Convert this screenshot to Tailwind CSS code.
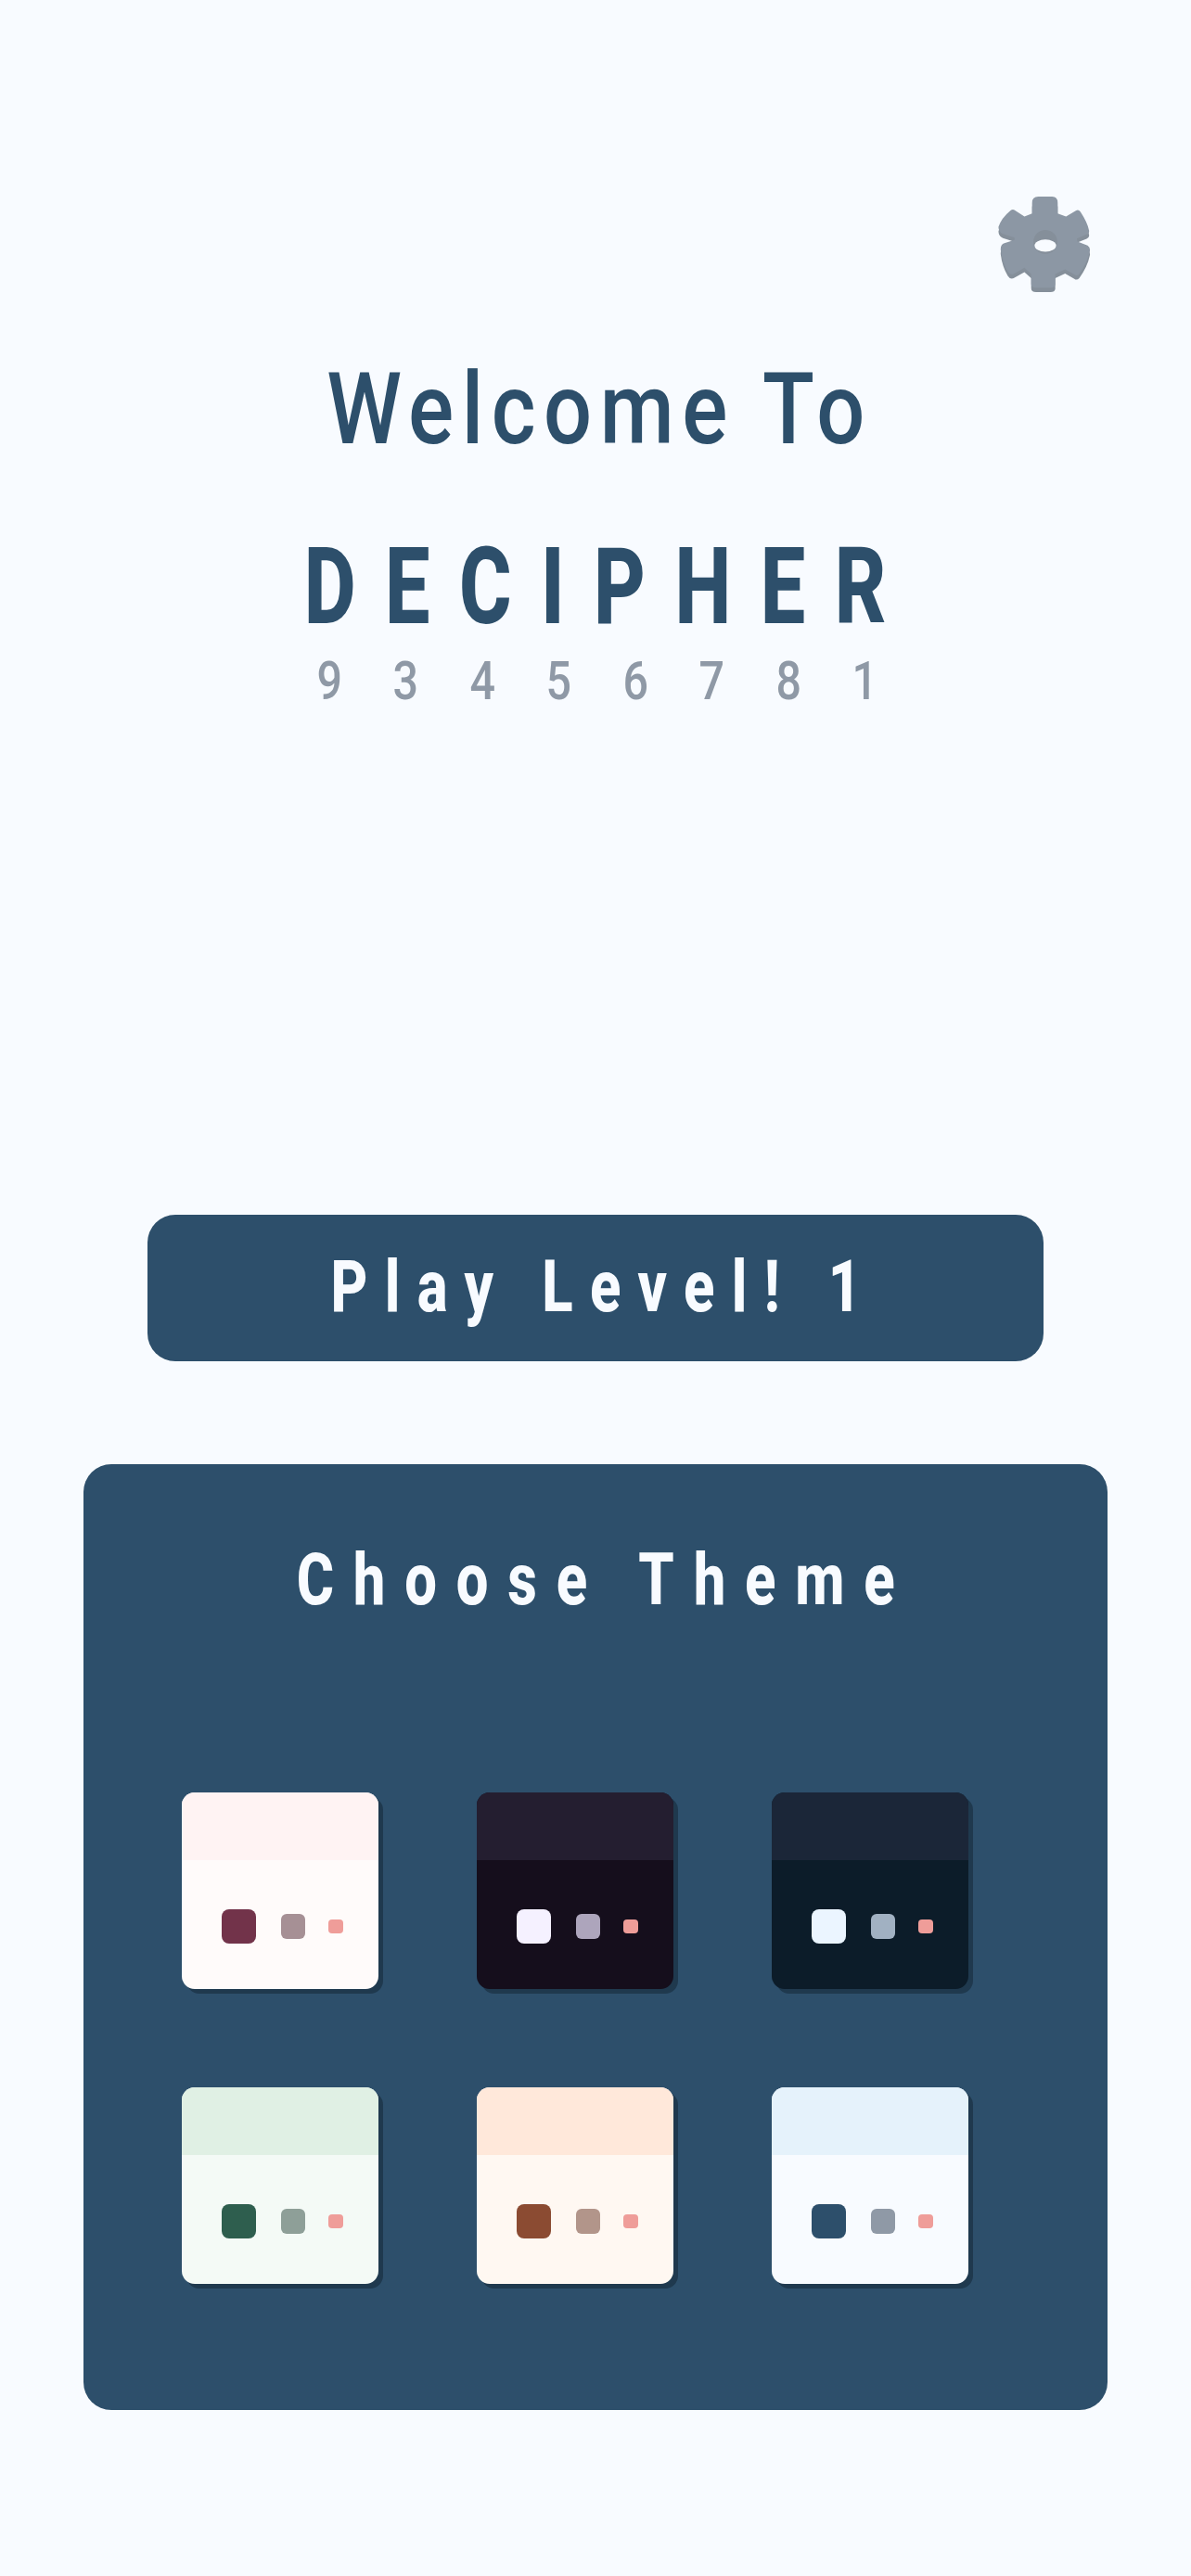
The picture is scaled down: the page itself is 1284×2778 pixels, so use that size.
<!DOCTYPE html>
<html lang="en">
<head>
  <meta charset="UTF-8" />
  <title>Decipher</title>
  <script src="https://cdn.jsdelivr.net/npm/@tailwindcss/browser@4"></script>
</head>
<body class="bg-[#f8fbff] font-['Roboto',sans-serif] w-[1284px] h-[2778px] overflow-hidden">
  <!-- header -->
  <div class="flex justify-end pt-[212px] pr-[108px] h-[380px]">
    <svg class="w-[100px] h-[103px]" viewBox="105 65 300 310">
      <path fill="#858f9a" transform="translate(0 14)" d="M215 85Q215 65 235 65L280 65Q298 65 298 85L298 120L325 130L358 110Q366 106 372 115Q395 150 400 176Q400 186 392 188L360 201L362 211L395 224Q405 230 402 243Q395 278 368 316Q360 324 352 318L322 301L290 316L290 351Q288 361 275 361L228 361Q212 361 212 348L212 316L190 296L155 316Q143 320 136 308Q118 278 113 238Q112 220 125 216L158 206L158 198L120 186Q105 178 106 163Q115 135 145 110Q152 105 160 110L190 130L215 120Z"/>
      <path fill="#8c97a4" d="M215 85Q215 65 235 65L280 65Q298 65 298 85L298 120L325 130L358 110Q366 106 372 115Q395 150 400 176Q400 186 392 188L360 201L362 211L395 224Q405 230 402 243Q395 278 368 316Q360 324 352 318L322 301L290 316L290 351Q288 361 275 361L228 361Q212 361 212 348L212 316L190 296L155 316Q143 320 136 308Q118 278 113 238Q112 220 125 216L158 206L158 198L120 186Q105 178 106 163Q115 135 145 110Q152 105 160 110L190 130L215 120Z"/>
      <circle cx="258" cy="212" r="39" fill="#858f9a"/>
      <ellipse cx="258" cy="224" rx="35" ry="20" fill="#f8fbff"/>
    </svg>
  </div>

  <!-- title -->
  <div class="flex flex-col items-center text-[#2d4f6b]">
    <h1 class="text-[108px] leading-[130px] h-[130px] -mt-[4px] font-medium tracking-[10px] pl-[10px] scale-x-[0.85] whitespace-nowrap">Welcome To</h1>
    <h2 class="text-[115px] leading-[130px] h-[130px] mt-[62px] font-extrabold tracking-[42px] pl-[42px] scale-x-[0.75]">DECIPHER</h2>
    <div class="flex text-[#8f99a6] text-[57px] leading-[60px] mt-[7px] ml-[3px] text-center font-medium">
      <span class="w-[82.5px] scale-x-[0.85]">9</span>
      <span class="w-[82.5px] scale-x-[0.85]">3</span>
      <span class="w-[82.5px] scale-x-[0.85]">4</span>
      <span class="w-[82.5px] scale-x-[0.85]">5</span>
      <span class="w-[82.5px] scale-x-[0.85]">6</span>
      <span class="w-[82.5px] scale-x-[0.85]">7</span>
      <span class="w-[82.5px] scale-x-[0.85]">8</span>
      <span class="w-[82.5px] scale-x-[0.85]">1</span>
    </div>
  </div>

  <!-- play -->
  <button class="block w-[966px] h-[158px] ml-[159px] mt-[545px] bg-[#2d4f6b] rounded-[30px] text-[#f8fbff] text-[77px] font-extrabold">
    <span class="inline-block tracking-[23px] pl-[23px] scale-x-[0.8] whitespace-nowrap">Play Level! 1</span>
  </button>

  <!-- themes -->
  <div class="w-[1104px] h-[1020px] ml-[90px] mt-[111px] bg-[#2d4f6b] rounded-[30px]">
    <div class="flex justify-center text-[#f8fbff] text-[77px] leading-[90px] font-extrabold pt-[80px] h-[354px]">
      <h3 class="tracking-[26px] pl-[26px] scale-x-[0.8] whitespace-nowrap">Choose Theme</h3>
    </div>
    <div class="grid grid-cols-[212px_212px_212px] gap-[106px] pl-[106px]">

      <div class="h-[212px] rounded-[14px] overflow-hidden bg-[#fffbfa] shadow-[5px_5px_0_#1f394e] flex flex-col">
        <div class="h-[73px] bg-[#fff3f3]"></div>
        <div class="flex items-center pl-[43px] pt-[4px] flex-1">
          <div class="w-[37px] h-[37px] rounded-[8px] bg-[#72334a]"></div>
          <div class="w-[26px] h-[27px] rounded-[6px] ml-[27px] bg-[#a69095]"></div>
          <div class="w-[16px] h-[15px] rounded-[4px] ml-[25px] bg-[#ef9d99]"></div>
        </div>
      </div>

      <div class="h-[212px] rounded-[14px] overflow-hidden bg-[#150e1c] shadow-[5px_5px_0_#1f394e] flex flex-col">
        <div class="h-[73px] bg-[#241e30]"></div>
        <div class="flex items-center pl-[43px] pt-[4px] flex-1">
          <div class="w-[37px] h-[37px] rounded-[8px] bg-[#f5f1ff]"></div>
          <div class="w-[26px] h-[27px] rounded-[6px] ml-[27px] bg-[#ada5bc]"></div>
          <div class="w-[16px] h-[15px] rounded-[4px] ml-[25px] bg-[#ef9d99]"></div>
        </div>
      </div>

      <div class="h-[212px] rounded-[14px] overflow-hidden bg-[#0c1c29] shadow-[5px_5px_0_#1f394e] flex flex-col">
        <div class="h-[73px] bg-[#1b2638]"></div>
        <div class="flex items-center pl-[43px] pt-[4px] flex-1">
          <div class="w-[37px] h-[37px] rounded-[8px] bg-[#ebf5ff]"></div>
          <div class="w-[26px] h-[27px] rounded-[6px] ml-[27px] bg-[#a1b1c2]"></div>
          <div class="w-[16px] h-[15px] rounded-[4px] ml-[25px] bg-[#ef9d99]"></div>
        </div>
      </div>

      <div class="h-[212px] rounded-[14px] overflow-hidden bg-[#f4faf6] shadow-[5px_5px_0_#1f394e] flex flex-col">
        <div class="h-[73px] bg-[#e0f0e4]"></div>
        <div class="flex items-center pl-[43px] pt-[4px] flex-1">
          <div class="w-[37px] h-[37px] rounded-[8px] bg-[#2e5e4e]"></div>
          <div class="w-[26px] h-[27px] rounded-[6px] ml-[27px] bg-[#8e9f98]"></div>
          <div class="w-[16px] h-[15px] rounded-[4px] ml-[25px] bg-[#ef9d99]"></div>
        </div>
      </div>

      <div class="h-[212px] rounded-[14px] overflow-hidden bg-[#fff8f2] shadow-[5px_5px_0_#1f394e] flex flex-col">
        <div class="h-[73px] bg-[#ffe8da]"></div>
        <div class="flex items-center pl-[43px] pt-[4px] flex-1">
          <div class="w-[37px] h-[37px] rounded-[8px] bg-[#8b4b32]"></div>
          <div class="w-[26px] h-[27px] rounded-[6px] ml-[27px] bg-[#b2958a]"></div>
          <div class="w-[16px] h-[15px] rounded-[4px] ml-[25px] bg-[#ef9d99]"></div>
        </div>
      </div>

      <div class="h-[212px] rounded-[14px] overflow-hidden bg-[#f8fbff] shadow-[5px_5px_0_#1f394e] flex flex-col">
        <div class="h-[73px] bg-[#e5f2fb]"></div>
        <div class="flex items-center pl-[43px] pt-[4px] flex-1">
          <div class="w-[37px] h-[37px] rounded-[8px] bg-[#2d4f6b]"></div>
          <div class="w-[26px] h-[27px] rounded-[6px] ml-[27px] bg-[#8f99a6]"></div>
          <div class="w-[16px] h-[15px] rounded-[4px] ml-[25px] bg-[#ef9d99]"></div>
        </div>
      </div>

    </div>
  </div>
</body>
</html>
